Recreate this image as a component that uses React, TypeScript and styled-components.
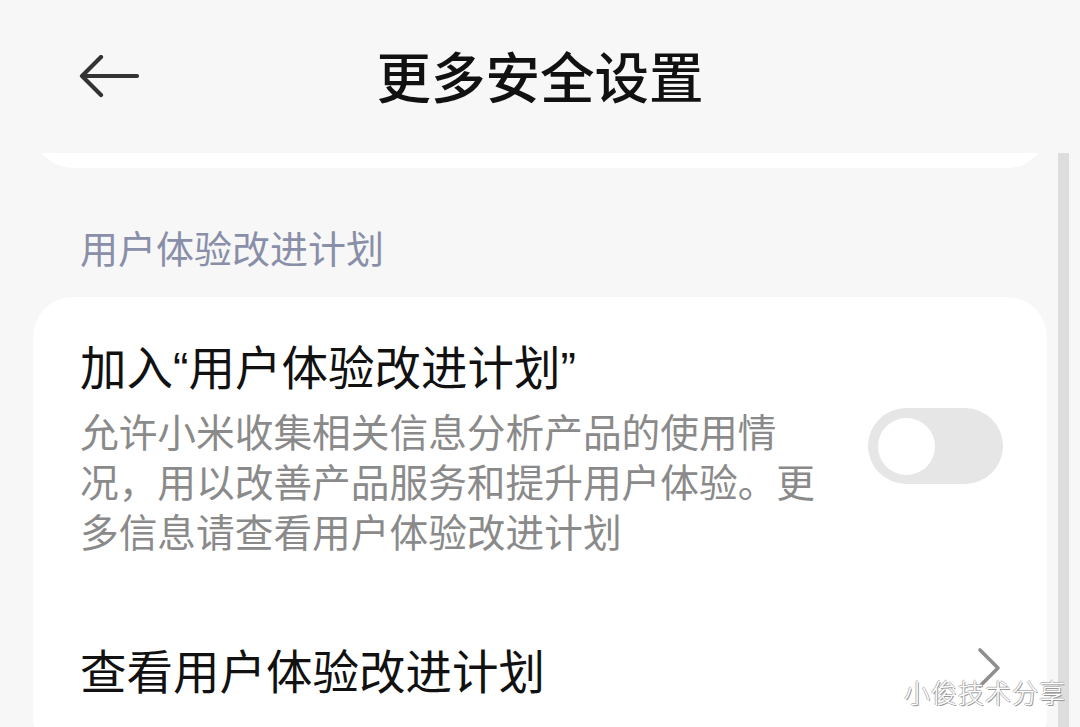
import React from "react";
import styled, { createGlobalStyle } from "styled-components";

const GlobalStyle = createGlobalStyle`
  * {
    box-sizing: border-box;
  }
  body {
    margin: 0;
    background: #f7f7f7;
    font-family: "Noto Sans CJK SC", "Noto Sans", sans-serif;
  }
`;

const Page = styled.div`
  position: relative;
  width: 1080px;
  height: 727px;
  overflow: hidden;
  background: #f7f7f7;
`;

const Header = styled.header`
  display: grid;
  grid-template-columns: 1fr auto 1fr;
  align-items: center;
  height: 153px;
`;

const BackButton = styled.button`
  justify-self: start;
  display: flex;
  margin-left: 78px;
  padding: 0;
  border: none;
  background: none;
`;

const Title = styled.h1`
  margin: 0 0 4px;
  font-size: 54.5px;
  font-weight: 500;
  line-height: 64px;
  color: #111;
`;

const Content = styled.main`
  padding: 0 33px;
`;

const TailClip = styled.div`
  display: flex;
  align-items: flex-end;
  height: 15px;
  overflow: hidden;
`;

const Card = styled.section<{ $height?: number }>`
  flex-shrink: 0;
  width: 100%;
  height: ${({ $height }) => ($height ? `${$height}px` : "auto")};
  background: #fff;
  border-radius: 40px;
`;

const SectionLabel = styled.h2`
  margin: 54px 0 25px 47px;
  font-size: 38px;
  font-weight: 400;
  line-height: 50px;
  color: #8a8fa9;
`;

const Row = styled.div<{ $top: number; $bottom: number; $right: number }>`
  display: flex;
  align-items: center;
  justify-content: space-between;
  padding: ${({ $top, $bottom, $right }) => `${$top}px ${$right}px ${$bottom}px 47px`};
`;

const RowText = styled.div`
  display: flex;
  flex-direction: column;
  gap: 8px;
`;

const RowTitle = styled.div`
  font-size: 46.5px;
  font-weight: 400;
  line-height: 56px;
  color: #111;
`;

const Quote = styled.span`
  font-family: "Liberation Sans", sans-serif;
`;

const RowDesc = styled.div`
  width: 745px;
  font-size: 38.7px;
  line-height: 50px;
  color: #8a8a8a;
`;

const Switch = styled.div<{ $on?: boolean }>`
  display: flex;
  align-items: center;
  justify-content: ${({ $on }) => ($on ? "flex-end" : "flex-start")};
  width: 135px;
  height: 76px;
  padding: 0 10px;
  border-radius: 38px;
  background: ${({ $on }) => ($on ? "#3482ff" : "#e6e6e6")};
`;

const Knob = styled.div`
  width: 57px;
  height: 57px;
  border-radius: 50%;
  background: #fff;
`;

const ScrollBar = styled.div`
  position: absolute;
  top: 153px;
  bottom: 0;
  left: 1058px;
  width: 11px;
  background: #dddddd;
`;

const Watermark = styled.div`
  position: absolute;
  right: 14px;
  bottom: 20px;
  font-size: 26px;
  font-weight: 300;
  line-height: 30px;
  color: #fff;
  letter-spacing: 1px;
  text-shadow: 1px 1px 0 #999, -1px 0 0 #bbb, 0 -1px 0 #bbb;
`;

const BackIcon = () => (
  <svg width="62" height="44" viewBox="0 0 62 44" fill="none">
    <path
      d="M59 21H4M23 2L4 21L23 40"
      stroke="#333"
      strokeWidth="4.2"
      strokeLinecap="round"
      strokeLinejoin="round"
    />
  </svg>
);

const ChevronIcon = () => (
  <svg width="26" height="44" viewBox="0 0 26 44" fill="none">
    <path
      d="M4 3L22 21L4 39"
      stroke="#8e8e8e"
      strokeWidth="3.6"
      strokeLinecap="round"
      strokeLinejoin="round"
    />
  </svg>
);

const App: React.FC = () => {
  return (
    <Page>
      <GlobalStyle />
      <Header>
        <BackButton aria-label="返回">
          <BackIcon />
        </BackButton>
        <Title>更多安全设置</Title>
        <span />
      </Header>
      <Content>
        <TailClip>
          <Card $height={100} />
        </TailClip>
        <SectionLabel>用户体验改进计划</SectionLabel>
        <Card>
          <Row $top={40} $bottom={44} $right={44}>
            <RowText>
              <RowTitle>
                加入<Quote>“</Quote>用户体验改进计划<Quote>”</Quote>
              </RowTitle>
              <RowDesc>
                允许小米收集相关信息分析产品的使用情况，用以改善产品服务和提升用户体验。更多信息请查看用户体验改进计划
              </RowDesc>
            </RowText>
            <Switch>
              <Knob />
            </Switch>
          </Row>
          <Row $top={42} $bottom={60} $right={45}>
            <RowTitle>查看用户体验改进计划</RowTitle>
            <ChevronIcon />
          </Row>
        </Card>
      </Content>
      <ScrollBar />
      <Watermark>小俊技术分享</Watermark>
    </Page>
  );
};

export default App;
